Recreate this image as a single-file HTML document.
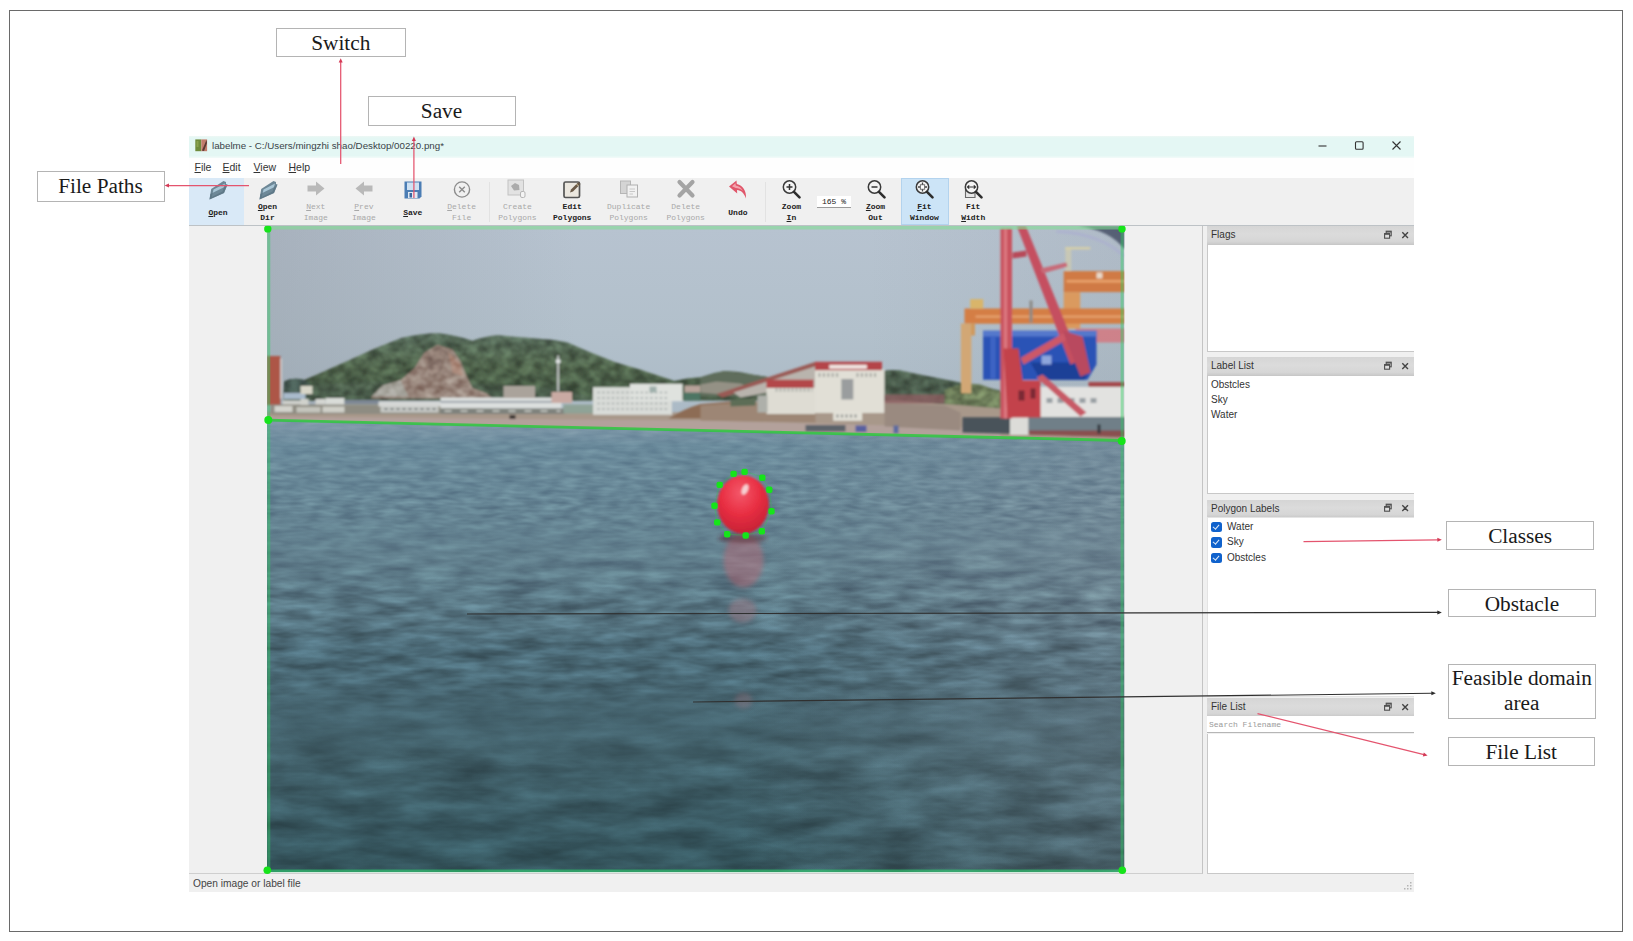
<!DOCTYPE html>
<html lang="en">
<head>
<meta charset="utf-8">
<title>labelme annotation figure</title>
<style>
*{box-sizing:border-box;margin:0;padding:0}
html,body{width:1633px;height:941px;overflow:hidden;background:#fff}
body{position:relative;font-family:"Liberation Sans",sans-serif;color:#222}
.abs{position:absolute}
#frame{left:9px;top:10px;width:1614px;height:922px;border:1.5px solid #6a6a6a}
.lab{position:absolute;border:1.3px solid #b4b4b4;background:#fff;font-family:"Liberation Serif",serif;font-size:21.3px;color:#1a1a1a;text-align:center;line-height:25.5px;white-space:nowrap}
#win{left:189px;top:136px;width:1225px;height:756px;background:#f0f0f0}
#title{left:0;top:0;width:1225px;height:21.5px;background:linear-gradient(#eef8f5,#e4f7f4 2px,#e4f7f4 19.5px,#f3fbf9)}
#title .t{position:absolute;left:23px;top:3px;font-size:9.75px;line-height:14px;color:#3a4448;white-space:nowrap}
#menu{left:0;top:21.5px;width:1225px;height:20.5px;background:#fefefe}
#menu span{position:absolute;top:2.5px;font-size:10.5px;line-height:14px;color:#333}
#menu u{text-decoration-thickness:1px;text-underline-offset:1px}
#tool{left:0;top:41.5px;width:1225px;height:48px;background:#f0f0f0;border-bottom:1px solid #bdc2c6}
.tb{position:absolute;top:0;height:47px;text-align:center;font-family:"Liberation Mono",monospace;font-size:8px;line-height:10.5px;color:#222;font-weight:bold;white-space:nowrap}
.tb.dis{color:#a8a8a8;font-weight:normal}
.tb .l{position:absolute;left:-20px;right:-20px;text-align:center}
.tb svg{position:absolute;left:50%;top:0;margin-left:-11px}
.hl{background:#d8e8f6}
#canvas{left:0;top:89.500px;width:1014px;height:648px;background:#f0f0f0;border-right:1.500px solid #c4c4c4;border-bottom:1.500px solid #cfcfcf}
.dockh{position:absolute;left:1018px;width:207px;height:17.5px;background:linear-gradient(#d5d5d5,#dbdbdb 45%,#d6d6d6 85%,#cbcbcb);font-size:10px;line-height:17px;padding-left:4px;color:#333}
.dockb{position:absolute;left:1018px;width:207px;background:#fff;border:1px solid #c8c8c8;border-right:none;font-size:10px;color:#333}
.dockh i{position:absolute;top:0;font-style:normal;font-size:9px;color:#333}
.li{position:absolute;left:3px;line-height:12px;white-space:nowrap}
.cb{position:absolute;left:3px;width:10.5px;height:10.5px;border-radius:2.500px;background:#1062cc}
.cb:after{content:"";position:absolute;left:3.4px;top:1.4px;width:2.6px;height:5.2px;border:solid #dfeaf8;border-width:0 1.2px 1.2px 0;transform:rotate(40deg)}
#status{left:0;top:738px;width:1225px;height:18px;background:#f0f0f0;font-size:10.2px;line-height:20px;padding-left:4px;color:#444}
</style>
</head>
<body>
<div id="frame" class="abs"></div>

<!-- annotation label boxes -->
<div class="lab" style="left:276px;top:28px;width:129.500px;height:29px;line-height:28.400px">Switch</div>
<div class="lab" style="left:367.5px;top:95.5px;width:148px;height:30.5px;line-height:29.6px">Save</div>
<div class="lab" style="left:36.5px;top:171px;width:128px;height:30.5px;line-height:29.6px">File Paths</div>
<div class="lab" style="left:1446.2px;top:521px;width:147.8px;height:29px;line-height:28.4px">Classes</div>
<div class="lab" style="left:1447.8px;top:588.5px;width:148.2px;height:28.7px;line-height:28.1px">Obstacle</div>
<div class="lab" style="left:1448px;top:663.5px;width:147.5px;height:55.5px;padding-top:1.3px">Feasible domain<br>area</div>
<div class="lab" style="left:1448px;top:737px;width:146.5px;height:29px;line-height:28.1px">File List</div>

<div id="win" class="abs">
  <div id="title" class="abs"><svg class="abs" style="left:5.500px;top:2.500px" width="13" height="13" viewBox="0 0 13 13"><rect x=".3" y=".4" width="6" height="11.800" fill="#6f8b3b"/><rect x="6.300" y=".4" width="5.800" height="11.800" fill="#c27c6c"/><path d="M7 11.500 L11.500 1 L12 4 L9 12 Z" fill="#5a3a34"/><rect x="1.500" y="2" width="2" height="6" fill="#8aa24e"/></svg>
<svg class="abs" style="left:1124px;top:3px" width="96" height="14" viewBox="0 0 96 14"><path d="M5.500 7 H13.500" stroke="#333" stroke-width="1.100"/><rect x="42.500" y="2.700" width="7.600" height="7.600" rx="1" fill="none" stroke="#333" stroke-width="1.100"/><path d="M79.500 2.500 L87.500 10.500 M87.500 2.500 L79.500 10.500" stroke="#333" stroke-width="1.100"/></svg><span class="t">labelme - C:/Users/mingzhi shao/Desktop/00220.png*</span></div>
  <div id="menu" class="abs">
    <span style="left:5.5px"><u>F</u>ile</span>
    <span style="left:33.5px"><u>E</u>dit</span>
    <span style="left:64.5px"><u>V</u>iew</span>
    <span style="left:99.5px"><u>H</u>elp</span>
  </div>
  <div id="tool" class="abs"><div class="abs hl" style="left:0px;top:0;width:55px;height:47.5px;background:#d9e9f7"></div><div class="tb" style="left:5.0px;width:48px"><svg width="22" height="22" viewBox="0 0 22 22"><path d="M2.500 21.500 L4.200 11 L16.500 3 L19 4 L19 6 L20.500 6.500 L17 15 Z" fill="#6d8796"/><path d="M4.800 19 L6.500 11.500 L18 5.500 L15.500 13.500 Z" fill="#a9c6d6"/><path d="M2.500 21.500 L3.300 16 L17.500 9 L20.500 6.500 L17 15 Z" fill="#5b7483" opacity=".75"/></svg><span class="l" style="top:30px"><u>O</u>pen</span></div>
<div class="tb" style="left:54.5px;width:48px"><svg width="22" height="22" viewBox="0 0 22 22"><path d="M2.500 21.500 L4.200 11 L16.500 3 L19 4 L19 6 L20.500 6.500 L17 15 Z" fill="#6d8796"/><path d="M4.800 19 L6.500 11.500 L18 5.500 L15.500 13.500 Z" fill="#a9c6d6"/><path d="M2.500 21.500 L3.300 16 L17.500 9 L20.500 6.500 L17 15 Z" fill="#5b7483" opacity=".75"/></svg><span class="l" style="top:24.3px"><u>O</u>pen</span><span class="l" style="top:35.3px">Dir</span></div>
<div class="tb dis" style="left:102.8px;width:48px"><svg width="22" height="22" viewBox="0 0 22 22"><path d="M2.5 7.5 H11 V3.5 L19.5 10.5 L11 17.5 V13.5 H2.5 Z" fill="#b9b9b9"/></svg><span class="l" style="top:24.3px"><u>N</u>ext</span><span class="l" style="top:35.3px">Image</span></div>
<div class="tb dis" style="left:150.9px;width:48px"><svg width="22" height="22" viewBox="0 0 22 22"><path d="M19.5 7.5 H11 V3.5 L2.5 10.5 L11 17.5 V13.5 H19.5 Z" fill="#b9b9b9"/></svg><span class="l" style="top:24.3px"><u>P</u>rev</span><span class="l" style="top:35.3px">Image</span></div>
<div class="tb" style="left:199.8px;width:48px"><svg width="22" height="22" viewBox="0 0 22 22"><path d="M2.5 3.5 H19.5 V18.5 L17.5 20.5 H2.5 Z" fill="#4b7db4"/><rect x="5" y="4.5" width="12" height="7.5" fill="#cfe1f2"/><rect x="6" y="14" width="9.5" height="6" fill="#dfe9f3"/><rect x="7.5" y="15" width="2.5" height="4.5" fill="#3b68a0"/></svg><span class="l" style="top:30px"><u>S</u>ave</span></div>
<div class="tb dis" style="left:248.60000000000002px;width:48px"><svg width="22" height="22" viewBox="0 0 22 22"><circle cx="11" cy="11.5" r="7.6" fill="none" stroke="#8c8c8c" stroke-width="1.4"/><path d="M8.2 8.7 L13.8 14.3 M13.8 8.7 L8.2 14.3" stroke="#8c8c8c" stroke-width="1.4"/></svg><span class="l" style="top:24.3px"><u>D</u>elete</span><span class="l" style="top:35.3px">File</span></div>
<div class="abs" style="left:299.5px;top:4px;width:1px;height:40px;background:#e2e2e2"></div>
<div class="tb dis" style="left:304.4px;width:48px"><svg width="22" height="22" viewBox="0 0 22 22"><rect x="2" y="2" width="15.5" height="15" fill="#e2e2e2" stroke="#c2c2c2"/><path d="M5 8 L9 5 L13 7 L13.5 12 L8 12.5 Z" fill="#ababab"/><rect x="14.5" y="13.5" width="4.5" height="6" rx="1.5" fill="#f4f4f4" stroke="#b5b5b5"/></svg><span class="l" style="top:24.3px">Create</span><span class="l" style="top:35.3px">Polygons</span></div>
<div class="tb" style="left:359.2px;width:48px"><svg width="22" height="22" viewBox="0 0 22 22"><rect x="3" y="4" width="15.5" height="15.500" rx="1.5" fill="#ebe7df" stroke="#555" stroke-width="1.7"/><path d="M9 14.500 L10 11.500 L17.5 4 L19.500 6 L12 13.500 Z" fill="#6a5a48"/><path d="M15.500 6 L17.500 8" stroke="#d9c9a0"/></svg><span class="l" style="top:24.3px">Edit</span><span class="l" style="top:35.3px">Polygons</span></div>
<div class="tb dis" style="left:415.6px;width:48px"><svg width="22" height="22" viewBox="0 0 22 22"><rect x="2.5" y="3" width="10" height="12.500" fill="#d4d4d4" stroke="#b6b6b6"/><rect x="9" y="7" width="10.500" height="12" fill="#f1f1f1" stroke="#b0b0b0"/><path d="M11.500 11 H17 M11.500 13.500 H17 M11.500 16 H15" stroke="#c8c8c8"/></svg><span class="l" style="top:24.3px">Duplicate</span><span class="l" style="top:35.3px">Polygons</span></div>
<div class="tb dis" style="left:472.7px;width:48px"><svg width="22" height="22" viewBox="0 0 22 22"><path d="M4.500 4 L17.500 17.500 M17.500 4 L4.500 17.500" stroke="#a4a4a4" stroke-width="4.200" stroke-linecap="round"/></svg><span class="l" style="top:24.3px">Delete</span><span class="l" style="top:35.3px">Polygons</span></div>
<div class="tb" style="left:524.9px;width:48px"><svg width="22" height="22" viewBox="0 0 22 22"><path d="M2 8.500 L9.500 2.500 L9.800 6 C16 7.500 19.500 13 19 20.500 C17 15 14 12.300 10 12 L10.200 15.500 Z" fill="#e0566a"/><path d="M5 8.300 L8.500 5.300 L8.700 7.600 C12 8.300 14.500 10 16 13 C13.500 10.800 11 10 8.800 10 Z" fill="#f4a3ad"/></svg><span class="l" style="top:30px">Undo</span></div>
<div class="abs" style="left:575.5px;top:4px;width:1px;height:40px;background:#e2e2e2"></div>
<div class="tb" style="left:578.4px;width:48px"><svg width="22" height="22" viewBox="0 0 22 22"><circle cx="9.500" cy="9" r="6.200" fill="#f4f4f4" stroke="#3a3a3a" stroke-width="1.500"/><path d="M6.500 9 H12.500 M9.500 6 V12" stroke="#333" stroke-width="1.500"/><path d="M14 13.800 L19.500 19.300" stroke="#2d2d2d" stroke-width="2.600" stroke-linecap="round"/></svg><span class="l" style="top:24.3px">Zoom</span><span class="l" style="top:35.3px"><u>I</u>n</span></div>
<div class="abs" style="left:628px;top:18px;width:34px;height:12.500px;background:#fff;border-bottom:1px solid #9a9a9a;font-family:'Liberation Mono',monospace;font-size:8px;line-height:12px;text-align:center;color:#222">165 %</div>
<div class="tb" style="left:662.5px;width:48px"><svg width="22" height="22" viewBox="0 0 22 22"><circle cx="9.500" cy="9" r="6.200" fill="#f4f4f4" stroke="#3a3a3a" stroke-width="1.500"/><path d="M6.500 9 H12.500" stroke="#333" stroke-width="1.500"/><path d="M14 13.800 L19.500 19.300" stroke="#2d2d2d" stroke-width="2.600" stroke-linecap="round"/></svg><span class="l" style="top:24.3px"><u>Z</u>oom</span><span class="l" style="top:35.3px">Out</span></div>
<div class="abs hl" style="left:711.5px;top:0;width:48.500px;height:47.500px;background:#cce4f7;border:1px solid #b3d3ee"></div><div class="tb" style="left:711.4px;width:48px"><svg width="22" height="22" viewBox="0 0 22 22"><circle cx="9.500" cy="9" r="6.200" fill="#f4f4f4" stroke="#3a3a3a" stroke-width="1.500"/><path d="M9.500 4.500 V13.500 M5 9 H14" stroke="#444" stroke-width="1.300"/><rect x="7.300" y="6.800" width="4.400" height="4.400" fill="#fff" stroke="#555" stroke-width=".8"/><path d="M14 13.800 L19.500 19.300" stroke="#2d2d2d" stroke-width="2.600" stroke-linecap="round"/></svg><span class="l" style="top:24.3px"><u>F</u>it</span><span class="l" style="top:35.3px">Window</span></div>
<div class="tb" style="left:760.2px;width:48px"><svg width="22" height="22" viewBox="0 0 22 22"><path d="M3.500 10 V19.500 H13 V13" fill="#e6e6e6" stroke="#6a6a6a" stroke-width="1.100"/><circle cx="9.500" cy="9" r="6.200" fill="#f4f4f4" stroke="#3a3a3a" stroke-width="1.500"/><path d="M5.500 9 H13.500 M7.200 7.300 L5.500 9 L7.200 10.700 M11.800 7.300 L13.500 9 L11.800 10.700" stroke="#333" stroke-width="1.200" fill="none"/><path d="M14 13.800 L19.500 19.300" stroke="#2d2d2d" stroke-width="2.600" stroke-linecap="round"/></svg><span class="l" style="top:24.3px">Fit</span><span class="l" style="top:35.3px"><u>W</u>idth</span></div>
</div>
  <div id="canvas" class="abs"></div>
  
  <div class="dockh" style="top:89.500px;height:18.500px;line-height:18.500px">Flags<svg class="abs" style="left:176px;top:50%;margin-top:-5px" width="28" height="10" viewBox="0 0 28 10"><rect x="3.200" y="1.200" width="5" height="4.600" fill="none" stroke="#4e4e4e" stroke-width="1.100"/><rect x="1.600" y="3.600" width="5" height="4.600" fill="#ddd" stroke="#4e4e4e" stroke-width="1.100"/><path d="M1.600 4.200 H6.600 M3.200 1.800 H8.200" stroke="#4e4e4e" stroke-width="1.200"/><path d="M19.300 2.200 L25 7.900 M25 2.200 L19.300 7.900" stroke="#444" stroke-width="1.400"/></svg></div>
  <div class="dockb" style="top:108px;height:108px"></div>
  <div class="dockh" style="top:221.3px;height:18px">Label List<svg class="abs" style="left:176px;top:50%;margin-top:-5px" width="28" height="10" viewBox="0 0 28 10"><rect x="3.200" y="1.200" width="5" height="4.600" fill="none" stroke="#4e4e4e" stroke-width="1.100"/><rect x="1.600" y="3.600" width="5" height="4.600" fill="#ddd" stroke="#4e4e4e" stroke-width="1.100"/><path d="M1.600 4.200 H6.600 M3.200 1.800 H8.200" stroke="#4e4e4e" stroke-width="1.200"/><path d="M19.300 2.200 L25 7.900 M25 2.200 L19.300 7.900" stroke="#444" stroke-width="1.400"/></svg></div>
  <div class="dockb" style="top:239.3px;height:118.7px">
    <span class="li" style="top:2.5px">Obstcles</span>
    <span class="li" style="top:17.5px">Sky</span>
    <span class="li" style="top:33px">Water</span>
  </div>
  <div class="dockh" style="top:363.5px;height:17.5px">Polygon Labels<svg class="abs" style="left:176px;top:50%;margin-top:-5px" width="28" height="10" viewBox="0 0 28 10"><rect x="3.200" y="1.200" width="5" height="4.600" fill="none" stroke="#4e4e4e" stroke-width="1.100"/><rect x="1.600" y="3.600" width="5" height="4.600" fill="#ddd" stroke="#4e4e4e" stroke-width="1.100"/><path d="M1.600 4.200 H6.600 M3.200 1.800 H8.200" stroke="#4e4e4e" stroke-width="1.200"/><path d="M19.300 2.200 L25 7.900 M25 2.200 L19.300 7.900" stroke="#444" stroke-width="1.400"/></svg></div>
  <div class="dockb" style="top:381px;height:180px;border-color:#e4e4e4">
    <b class="cb" style="top:3.5px"></b><span class="li" style="left:19px;top:2.5px">Water</span>
    <b class="cb" style="top:19px"></b><span class="li" style="left:19px;top:18px">Sky</span>
    <b class="cb" style="top:34.5px"></b><span class="li" style="left:19px;top:33.5px">Obstcles</span>
  </div>
  <div class="dockh" style="top:562.300px;height:17.500px;line-height:17.500px">File List<svg class="abs" style="left:176px;top:50%;margin-top:-5px" width="28" height="10" viewBox="0 0 28 10"><rect x="3.200" y="1.200" width="5" height="4.600" fill="none" stroke="#4e4e4e" stroke-width="1.100"/><rect x="1.600" y="3.600" width="5" height="4.600" fill="#ddd" stroke="#4e4e4e" stroke-width="1.100"/><path d="M1.600 4.200 H6.600 M3.200 1.800 H8.200" stroke="#4e4e4e" stroke-width="1.200"/><path d="M19.300 2.200 L25 7.900 M25 2.200 L19.300 7.900" stroke="#444" stroke-width="1.400"/></svg></div>
  <div class="abs" style="left:1018px;top:579.800px;width:207px;height:17.700px;background:#fff;border-bottom:1.500px solid #b6b6b6;font-family:'Liberation Mono',monospace;font-size:8px;line-height:17px;color:#9a9a9a;padding-left:2px">Search Filename</div>
  <div class="dockb" style="top:597.500px;height:140px;border-top:none"></div>

  <div id="status" class="abs">Open image or label file</div>
  <svg class="abs" style="left:1213px;top:744px" width="12" height="12" viewBox="0 0 12 12"><g fill="#b4b4b4"><rect x="8" y="2" width="1.500" height="1.500"/><rect x="8" y="5" width="1.500" height="1.500"/><rect x="5" y="5" width="1.500" height="1.500"/><rect x="8" y="8" width="1.500" height="1.500"/><rect x="5" y="8" width="1.500" height="1.500"/><rect x="2" y="8" width="1.500" height="1.500"/></g></svg>
</div>


<svg class="abs" style="left:266.5px;top:225.5px;overflow:visible" width="857.5" height="646" viewBox="266.5 225.5 857.5 646">
<defs>
<linearGradient id="sky" x1="0" y1="0" x2="0" y2="1"><stop offset="0" stop-color="#b7c3d0"/><stop offset=".5" stop-color="#b2c0cb"/><stop offset="1" stop-color="#a9b8c4"/></linearGradient>
<linearGradient id="sea" gradientUnits="userSpaceOnUse" x1="0" y1="420" x2="0" y2="871"><stop offset="0" stop-color="#8299ab"/><stop offset=".055" stop-color="#6b8b9c"/><stop offset=".31" stop-color="#62808e"/><stop offset=".44" stop-color="#567481"/><stop offset=".51" stop-color="#4c6b78"/><stop offset=".75" stop-color="#42616b"/><stop offset=".93" stop-color="#385861"/><stop offset="1" stop-color="#34545c"/></linearGradient>
<linearGradient id="skyL" x1="0" y1="0" x2="1" y2="0"><stop offset="0" stop-color="#7c8088" stop-opacity=".26"/><stop offset=".36" stop-color="#7c8088" stop-opacity="0"/><stop offset=".7" stop-color="#7c8088" stop-opacity="0"/><stop offset="1" stop-color="#7c8088" stop-opacity=".12"/></linearGradient>
<linearGradient id="seaR" x1="0" y1="0" x2="1" y2="0"><stop offset="0" stop-color="#8a8f9c" stop-opacity="0"/><stop offset=".55" stop-color="#8a8f9c" stop-opacity="0"/><stop offset="1" stop-color="#8a8f9c" stop-opacity=".28"/></linearGradient>
<radialGradient id="ball" cx=".45" cy=".3" r=".75"><stop offset="0" stop-color="#f4586a"/><stop offset=".5" stop-color="#e82e42"/><stop offset="1" stop-color="#c22033"/></radialGradient>
<filter id="b1" x="-5%" y="-5%" width="110%" height="110%"><feGaussianBlur stdDeviation="0.9"/></filter>
<filter id="b2" x="-20%" y="-20%" width="140%" height="140%"><feGaussianBlur stdDeviation="2.2"/></filter>
<filter id="b6" x="-30%" y="-30%" width="160%" height="160%"><feGaussianBlur stdDeviation="6"/></filter>
<filter id="w1" x="0" y="0" width="100%" height="100%" color-interpolation-filters="sRGB"><feTurbulence type="fractalNoise" baseFrequency="0.05 0.2" numOctaves="2" seed="3"/><feColorMatrix type="matrix" values="1.300 0 0 0 -0.160  1.300 0 0 0 -0.160  1.300 0 0 0 -0.160  0 0 0 0 1"/></filter>
<filter id="w2" x="0" y="0" width="100%" height="100%" color-interpolation-filters="sRGB"><feTurbulence type="fractalNoise" baseFrequency="0.024 0.1" numOctaves="3" seed="11"/><feColorMatrix type="matrix" values="1.350 0 0 0 -0.185  1.350 0 0 0 -0.185  1.350 0 0 0 -0.185  0 0 0 0 1"/></filter>
<filter id="w3" x="0" y="0" width="100%" height="100%" color-interpolation-filters="sRGB"><feTurbulence type="fractalNoise" baseFrequency="0.014 0.055" numOctaves="4" seed="5"/><feColorMatrix type="matrix" values="1.300 0 0 0 -0.165  1.300 0 0 0 -0.165  1.300 0 0 0 -0.165  0 0 0 0 1"/></filter>
<linearGradient id="m1g" gradientUnits="userSpaceOnUse" x1="0" y1="420" x2="0" y2="871"><stop offset="0" stop-color="#fff" stop-opacity=".3"/><stop offset=".2" stop-color="#fff" stop-opacity=".75"/><stop offset=".4" stop-color="#fff" stop-opacity="0"/></linearGradient>
<linearGradient id="m2g" gradientUnits="userSpaceOnUse" x1="0" y1="420" x2="0" y2="871"><stop offset=".18" stop-color="#fff" stop-opacity="0"/><stop offset=".38" stop-color="#fff" stop-opacity="1"/><stop offset=".58" stop-color="#fff" stop-opacity="1"/><stop offset=".78" stop-color="#fff" stop-opacity="0"/></linearGradient>
<linearGradient id="m3g" gradientUnits="userSpaceOnUse" x1="0" y1="420" x2="0" y2="871"><stop offset=".55" stop-color="#fff" stop-opacity="0"/><stop offset=".78" stop-color="#fff" stop-opacity="1"/><stop offset="1" stop-color="#fff" stop-opacity="1"/></linearGradient>
<mask id="m1" maskUnits="userSpaceOnUse" x="266" y="419" width="860" height="455"><rect x="266" y="419" width="860" height="455" fill="url(#m1g)"/></mask>
<mask id="m2" maskUnits="userSpaceOnUse" x="266" y="419" width="860" height="455"><rect x="266" y="419" width="860" height="455" fill="url(#m2g)"/></mask>
<mask id="m3" maskUnits="userSpaceOnUse" x="266" y="419" width="860" height="455"><rect x="266" y="419" width="860" height="455" fill="url(#m3g)"/></mask>
<clipPath id="seaclip"><path d="M266.500 419.500 L1124 440.500 L1124 871.500 L266.500 871.500 Z"/></clipPath><filter id="ln" x="0" y="0" width="100%" height="100%" color-interpolation-filters="sRGB"><feTurbulence type="fractalNoise" baseFrequency="0.09 0.12" numOctaves="3" seed="21"/><feColorMatrix type="matrix" values="1.600 0 0 0 -0.300  1.600 0 0 0 -0.300  1.600 0 0 0 -0.300  0 0 0 0 1"/></filter>
<clipPath id="hillc"><path d="M371 396 L382 385 L400.700 379.300 L414.200 367.200 L423.600 352.300 L437 344.200 L452 349 L460 360.400 L465.400 374 L472 387.400 L486 392.700 L492 398 L371 398 Z"/><path d="M283 397 L283.500 381 Q292 376.500 303.700 379.500 L320 372.500 L346.800 360.400 L373.800 348.300 L400.700 337.500 Q420 333 438.400 332.800 Q456 335 472 340.300 Q486 335.500 497.500 334.800 L520.400 336.800 L547.400 338.900 Q560 340 567.600 342.200 L587.800 351 L614.700 361.800 L641.700 369.800 L661.900 376.600 L674 380.600 Q686 377.500 700 376.800 Q712 372 724 370.400 Q740 371 754 374.500 L767 376.500 L767 400 L283 400 Z"/><path d="M880 394 L882 370.400 Q895 368.500 905 371 L924 375 L965 383 L1000 390 L1000 412 L880 412 Z"/></clipPath>
<linearGradient id="hillg" gradientUnits="userSpaceOnUse" x1="0" y1="332" x2="0" y2="400"><stop offset="0" stop-color="#566a5a"/><stop offset=".5" stop-color="#50644c"/><stop offset="1" stop-color="#465a45"/></linearGradient>
<clipPath id="vc"><rect x="255" y="225.300" width="885" height="660"/></clipPath><clipPath id="pc"><rect x="266.5" y="225.5" width="857.5" height="646"/></clipPath>
</defs>
<g clip-path="url(#pc)">
<rect x="266.5" y="225.5" width="857.5" height="215" fill="url(#sky)"/>
<rect x="266.5" y="225.5" width="857.5" height="215" fill="url(#skyL)"/>

<g filter="url(#b1)">
<!-- far hills -->
<path d="M283 397 L283.500 381 Q292 376.500 303.700 379.500 L320 372.500 L346.800 360.400 L373.800 348.300 L400.700 337.500 Q420 333 438.400 332.800 Q456 335 472 340.300 Q486 335.500 497.500 334.800 L520.400 336.800 L547.400 338.900 Q560 340 567.600 342.200 L587.800 351 L614.700 361.800 L641.700 369.800 L661.900 376.600 L674 380.600 Q686 377.500 700 376.800 Q712 372 724 370.400 Q740 371 754 374.500 L767 376.500 L767 400 L283 400 Z" fill="url(#hillg)"/>
<path d="M283 397 L283.500 381 Q292 376.500 303.700 379.500 L310 384 L310 397 Z" fill="#43564f"/>
<path d="M300 384 L420 380 L560 388 L600 400 L300 400 Z" fill="#4a5b4c" opacity=".7"/>
<path d="M880 394 L882 370.400 Q895 368.500 905 371 L924 375 L965 383 L1000 390 L1000 412 L880 412 Z" fill="#4b5d4d"/>
<path d="M944 390 Q960 381 980 384 L1002 392 L1002 414 L944 414 Z" fill="#6b7b58"/>
<!-- rock face -->
<path d="M371 396 L382 385 L400.700 379.300 L414.200 367.200 L423.600 352.300 L437 344.200 L452 349 L460 360.400 L465.400 374 L472 387.400 L486 392.700 L492 398 L371 398 Z" fill="#97847a"/>
<path d="M371 396 L382 385 L400 380 L408 396 Z" fill="#a5a39b"/>
<path d="M428 352 L437 345 L447 352 L440 372 L428 378 Z" fill="#86726a" opacity=".7"/>
<path d="M448 352 L459 362 L463 376 L452 372 Z" fill="#b08c7c" opacity=".8"/>
<g clip-path="url(#hillc)" style="mix-blend-mode:overlay" opacity=".3"><rect x="266.500" y="325" width="857.500" height="92" filter="url(#ln)"/></g>
<!-- left red tower -->
<rect x="266.500" y="355.500" width="13.500" height="49" fill="#ad5647"/>
<rect x="280" y="358" width="1.500" height="40" fill="#d9d2cf"/>
<!-- shoreline ground -->
<path d="M266.500 411 L700 412 L770 402 L900 400 L1000 408 L1124 414 L1124 441 L266.500 421 Z" fill="#a8988a"/>
<path d="M266.500 416 L700 420 L1000 428 L1000 437 L266.500 420.500 Z" fill="#b3a19b"/>
<path d="M668 418 Q684 408 700 403.500 L730 401 L770 404 L770 418 Z" fill="#8d6c55"/>
<path d="M700 405 L770 400 L815 404 L815 422 L700 420 Z" fill="#9d8674"/>
<!-- left buildings band -->
<rect x="283" y="392.500" width="22" height="6" fill="#a9bacb"/>
<rect x="300" y="385.500" width="12" height="8" fill="#d8d6c8"/>
<rect x="282" y="400" width="20" height="8" fill="#cfd0cc"/>
<rect x="315" y="398.500" width="10" height="9" fill="#d4d6d2"/>
<rect x="325" y="397.500" width="19" height="13" fill="#d9dcd8"/>
<rect x="344" y="399.500" width="35" height="5" fill="#7d8794"/>
<rect x="344" y="404" width="36" height="9" fill="#d6d9d6"/>
<rect x="270" y="404" width="212" height="9.500" fill="#8e8c82"/>
<rect x="274" y="405.500" width="18" height="6" fill="#d3d3cc"/><rect x="296" y="406.500" width="24" height="5.500" fill="#c4c4bc"/><rect x="322" y="406" width="22" height="6" fill="#cfcfc8"/><rect x="300" y="398.500" width="8" height="6" fill="#d0d2cc"/>
<rect x="380" y="405" width="58" height="7" fill="#c6c8c4"/><path d="M384 408.500 H436" stroke="#7e8484" stroke-width="2" stroke-dasharray="3 3"/>
<rect x="378" y="401" width="64" height="5" fill="#d5d7d6"/>
<rect x="440" y="397" width="121" height="11" fill="#dcdfde"/>
<rect x="440" y="400.500" width="121" height="1.600" fill="#8f98a2"/>
<rect x="440" y="408" width="125" height="5.500" fill="#7f827d"/><path d="M444 410.500 H560" stroke="#b9bbb6" stroke-width="2" stroke-dasharray="7 9"/>
<rect x="503" y="385.500" width="31.500" height="12" fill="#aaa39b"/>
<rect x="551" y="391.500" width="20.500" height="11" fill="#c9aaa3"/>
<rect x="556.700" y="355" width="1.800" height="36" fill="#c5c8c8"/>
<rect x="555.500" y="359" width="4.500" height="3.500" fill="#dfe2e2"/>
<rect x="563" y="404" width="30" height="9" fill="#8fa397"/>
<!-- white office -->
<rect x="592.500" y="386.700" width="79" height="27.600" fill="#d9dcd8"/>
<rect x="629.500" y="383.300" width="52.600" height="17.500" fill="#dfe2de"/>
<path d="M597 392 H668 M597 397.500 H668 M597 403 H668 M597 408.500 H668" stroke="#9fa6a6" stroke-width="1.600" stroke-dasharray="2.200 2.600"/>
<rect x="649" y="386" width="7" height="6" fill="#9fb0ac"/>
<rect x="683" y="392" width="17" height="8" fill="#4d7563"/>
<rect x="684" y="385" width="16" height="7" fill="#b7a39a"/>
<!-- mid small hill houses -->
<path d="M700 377 L724 370.400 L754 374.500 L767 376.500 L767 396 L700 396 Z" fill="#5f6d5b"/>
<path d="M700 384 L716 381 L740 383 L752 388 L716 393.500 L700 392 Z" fill="#a59d93" opacity=".75"/>
<!-- red roof building -->
<path d="M716 393.500 L814.500 361.500 L814.500 366.500 L722 397 Z" fill="#9a5a54"/>
<path d="M733 392 L814.500 366 L814.500 388 L766 392 L740 397 Z" fill="#b9b4ad"/>
<rect x="766" y="387" width="48.500" height="26.500" fill="#dedcd3"/>
<rect x="766" y="379.200" width="47" height="8.300" fill="#b3474a"/>
<path d="M775 389.500 H812" stroke="#a9aca8" stroke-width="3" stroke-dasharray="2 2"/>
<rect x="814.500" y="369" width="69.500" height="43.500" fill="#e1dfd6"/>
<rect x="814.500" y="361.300" width="67" height="8.400" fill="#b4444a"/>
<rect x="828.700" y="364.300" width="37.700" height="4" fill="#f1e6e2"/>
<rect x="840.800" y="378.500" width="12" height="20.500" fill="#9a9d9e"/>
<path d="M818 374.500 H838 M856 374.500 H876" stroke="#a9aaa4" stroke-width="4" stroke-dasharray="2 2.400"/>
<rect x="832.700" y="410.800" width="29" height="9.500" fill="#e3e1d8"/>
<path d="M836 415.500 H858" stroke="#8d8f8c" stroke-width="3" stroke-dasharray="2 2.500"/>
<rect x="757" y="395" width="10" height="17" fill="#aeb0aa"/>
<path d="M730 400 L755 397 L755 405 L730 406 Z" fill="#5d6d57"/>
<rect x="884" y="394" width="60" height="9" fill="#8d5f62" opacity=".8"/>
<path d="M884 403 L944 405 L960 412 L960 430 L884 426 Z" fill="#9a8a80"/>
<!-- boats near shore -->
<rect x="805" y="424.500" width="40" height="6.500" fill="#5b636b"/>
<rect x="855" y="425" width="11" height="6.500" fill="#5961a0"/>
<rect x="893" y="425" width="5" height="8" fill="#5a6aa0"/>
<rect x="509" y="414.500" width="6" height="4" fill="#3a3432"/>
</g>


<g filter="url(#b1)">
<!-- dark canopy top-right -->
<path d="M1078 225.500 Q1110 230 1124 249 L1124 225.500 Z" fill="#566074"/>
<path d="M1056 231 Q1100 233 1124 256" fill="none" stroke="#a9abd2" stroke-width="3" opacity=".55"/>
<!-- pale mast -->
<rect x="1064.800" y="247" width="6" height="24" fill="#cdcab0" opacity=".8"/>
<rect x="1064.800" y="246.500" width="25" height="2.400" fill="#d6cfa8"/>
<!-- orange gantry -->
<rect x="1063.200" y="270.600" width="61" height="21" fill="#d07a44"/>
<rect x="1066" y="279.500" width="58" height="2.500" fill="#e9a36c"/>
<rect x="1063.200" y="291.600" width="16.500" height="36.500" fill="#da9a5e"/>
<rect x="1096" y="272" width="6" height="6" fill="#e8d8c8"/>
<rect x="964" y="308" width="160" height="15.200" fill="#d47e45"/>
<rect x="975" y="315" width="149" height="2.200" fill="#e6a270"/>
<rect x="969.700" y="298.600" width="13" height="9.500" fill="#d9b56a"/>
<rect x="960.400" y="323" width="10.500" height="70" fill="#d2a775"/>
<rect x="970.500" y="323" width="4" height="12" fill="#cf9a5e"/>
<!-- pink beam right -->
<rect x="1075" y="328" width="49" height="14" fill="#d27c84" opacity=".9"/>
<!-- blue hopper -->
<path d="M982.600 330.200 H1096 V364 L1087 379.300 H982.600 Z" fill="#2b52b6"/>
<path d="M982.600 330.200 H1096 V336 H982.600 Z" fill="#5578cc"/>
<path d="M1030 362 H1080 L1088 372 L1084 379.300 H1040 Z" fill="#1d3f97"/>
<rect x="1041" y="355" width="10" height="9" fill="#8ea6dc"/>
<rect x="990" y="336" width="5" height="42" fill="#3e65c4"/>
<!-- ship -->
<rect x="1039.800" y="386.300" width="84.200" height="30.500" fill="#e2e2e0"/>
<rect x="1088" y="381.500" width="36" height="5" fill="#a54b50"/>
<path d="M1046 400 H1100" stroke="#9aa0a4" stroke-width="5" stroke-dasharray="6 5"/>
<path d="M962 416.700 H1124 V436 L962 432 Z" fill="#4a525a"/>
<rect x="1028" y="416.700" width="96" height="13.500" fill="#6f7f88"/>
<path d="M1028 430 H1124 V436.500 L1028 434 Z" fill="#8a5050"/>
<rect x="1009.500" y="415.500" width="18.500" height="19" fill="#dcdcd8"/>
<rect x="1097" y="424" width="3" height="9" fill="#33383c"/>
<!-- red crane -->
<rect x="1000" y="228" width="11.500" height="190" fill="#c9525f"/>
<rect x="1003.500" y="228" width="3" height="190" fill="#dc7880"/>
<path d="M1016.500 226 L1025.500 226 L1080 360 L1070 364 Z" fill="#c54f60"/>
<path d="M1012 252 L1026 250 L1026 256 L1012 258 Z" fill="#b84858"/>
<path d="M1020 357.500 L1064 332 L1068 338 L1023 364 Z" fill="#cc5868"/>
<path d="M1036 377 L1042 374 L1086 412 L1080 416 Z" fill="#c85a66"/>
<path d="M1040 268 L1066 262 L1067 266 L1042 273 Z" fill="#c86a78"/>
<path d="M1062 330 L1082 336 L1090 372 L1080 376 Z" fill="#b94a5e"/>
<path d="M1003 348 L1018 348 L1022 380 L1040 380 L1040 417 L1007 417 Z" fill="#c3434b"/>
<rect x="1018" y="390" width="6" height="10" fill="#7a2a34"/>
<rect x="1030" y="388" width="5" height="10" fill="#7a2a34"/>
<rect x="1029" y="300" width="3" height="22" fill="#8c8a86"/>
</g>


<path d="M266.500 419.500 L1124 440.500 L1124 871.500 L266.500 871.500 Z" fill="url(#sea)"/>
<path d="M266.500 419.500 L1124 440.500 L1124 871.500 L266.500 871.500 Z" fill="url(#seaR)"/>
<g clip-path="url(#seaclip)" style="mix-blend-mode:overlay" opacity=".27">
<g mask="url(#m1)"><rect x="266.500" y="419" width="857.500" height="452.500" filter="url(#w1)"/></g>
<g mask="url(#m2)"><rect x="266.500" y="419" width="857.500" height="452.500" filter="url(#w2)"/></g>
<g mask="url(#m3)"><rect x="266.500" y="419" width="857.500" height="452.500" filter="url(#w3)"/></g>
</g>


<g filter="url(#b2)">
<ellipse cx="743" cy="560" rx="20" ry="27" fill="#c86a74" opacity=".42"/>
<ellipse cx="742" cy="610" rx="14" ry="12" fill="#c87880" opacity=".3"/>
<ellipse cx="742" cy="538" rx="24" ry="5" fill="#5a3238" opacity=".55"/>
<ellipse cx="743" cy="700" rx="9" ry="8" fill="#c87880" opacity=".22"/>
</g>
<g filter="url(#b1)">
<ellipse cx="742.500" cy="504" rx="25.800" ry="29.200" fill="url(#ball)"/>
<ellipse cx="744.500" cy="489" rx="3" ry="5.500" fill="#f7cfd2" transform="rotate(25 744.500 489)"/>
</g>

</g>

<g fill="none">
<path d="M268 227.300 H1121.500" stroke="#7fe08f" stroke-width="3.600" opacity=".55"/>
<path d="M268.300 227 V870 M1121.600 227 V870" stroke="#2ad060" stroke-width="3" opacity=".42"/>
<path d="M268 419.600 L1121.500 440" stroke="#2fc83f" stroke-width="2.800" opacity=".85"/>
<path d="M268 870.300 H1121.500" stroke="#2fd070" stroke-width="2.800" opacity=".6"/>
<path d="M733.100 473.100 L744.500 471 L761.800 476.600 L769.200 489.600 L771.100 511.100 L761.800 530.300 L745.300 534.800 L726.700 533.700 L716.600 521.800 L713.900 505 L718.700 484.600 Z" stroke="#30d040" stroke-width="1.200" opacity=".28"/>
</g>
<g fill="#16e41a" clip-path="url(#vc)">
<circle cx="267.300" cy="228.400" r="3.700"/><circle cx="1121.500" cy="228.400" r="3.700"/>
<circle cx="267.800" cy="419.600" r="4"/><circle cx="1121.200" cy="440.400" r="4"/>
<circle cx="266.800" cy="869.800" r="3.800"/><circle cx="1121.800" cy="869.800" r="3.800"/>
<rect x="729.9" y="470.2" width="6.400" height="6.400" rx="2"/><rect x="740.9" y="468.2" width="6.400" height="6.400" rx="2"/><rect x="758.6" y="474.0" width="6.400" height="6.400" rx="2"/><rect x="765.6" y="486.0" width="6.400" height="6.400" rx="2"/><rect x="767.8" y="507.5" width="6.400" height="6.400" rx="2"/><rect x="758.1" y="527.6" width="6.400" height="6.400" rx="2"/><rect x="742.0" y="531.8" width="6.400" height="6.400" rx="2"/><rect x="723.5" y="530.6" width="6.400" height="6.400" rx="2"/><rect x="713.5" y="518.7" width="6.400" height="6.400" rx="2"/><rect x="710.8" y="502.0" width="6.400" height="6.400" rx="2"/><rect x="716.0" y="481.2" width="6.400" height="6.400" rx="2"/>
</g>

</svg>


<svg class="abs" style="left:0;top:0;pointer-events:none" width="1633" height="941" viewBox="0 0 1633 941">
<g stroke="#e4546e" stroke-width="1.250" fill="#d43a56">
<path d="M340.700 164 V61" fill="none"/><path d="M340.700 58.200 L338.700 62.600 H342.700 Z" stroke="none"/>
<path d="M413.900 198 V140" fill="none"/><path d="M413.900 136.600 L411.900 141 H415.900 Z" stroke="none"/>
<path d="M249 185.500 H168" fill="none"/><path d="M164.600 185.500 L169 183.500 V187.500 Z" stroke="none"/>
<path d="M1303.500 541.700 L1438 539.800" fill="none"/><path d="M1441.800 539.700 L1437.300 537.800 L1437.400 541.800 Z" stroke="none"/>
<path d="M1257.500 713.600 L1424 754.600" fill="none"/><path d="M1427.600 755.500 L1423.800 752.500 L1422.800 756.400 Z" stroke="none"/>
</g>
<g stroke="#303030" stroke-width="1.150" fill="#2a2a2a">
<path d="M467 614 L1438 612.400" fill="none"/><path d="M1441.800 612.400 L1437.300 610.400 V614.400 Z" stroke="none"/>
<path d="M693 702 L1432 693.300" fill="none"/><path d="M1435.800 693.200 L1431.300 691.300 L1431.400 695.300 Z" stroke="none"/>
</g>
</svg>

</body>
</html>
